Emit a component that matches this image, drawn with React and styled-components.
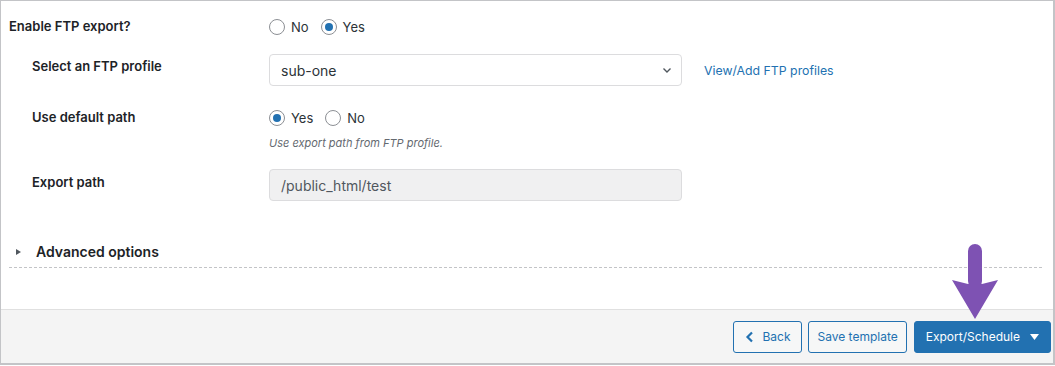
import React from 'react'
import styled, { createGlobalStyle } from 'styled-components'

const Global = createGlobalStyle`
    html, body {
        margin: 0;
        padding: 0;
        background: #fff;
    }
    body {
        font-family: Inter, "Noto Sans", "Liberation Sans", sans-serif;
        color: #1d2327;
        font-size: 13px;
    }
`

function Radio({ checked, label }) {
    return (
        <RadioLabel>
            <Circle checked={checked} />
            <span>{label}</span>
        </RadioLabel>
    )
}

export default function App() {
    return (
        <>
            <Global />
            <Panel>
                <Body>
                    <Row top={17}>
                        <Label indent={9} offset={0}>Enable FTP export?</Label>
                        <Field>
                            <RadioGroup>
                                <Radio label="No" />
                                <Radio label="Yes" checked />
                            </RadioGroup>
                        </Field>
                    </Row>
                    <Row top={18}>
                        <Label indent={32} offset={4}>Select an FTP profile</Label>
                        <Field>
                            <FieldLine>
                                <Select>
                                    <span>sub-one</span>
                                    <svg width="12" height="12" viewBox="0 0 12 12">
                                        <path d="M2.5 4.5 L6 8 L9.5 4.5" fill="none" stroke="#50575e" strokeWidth="1.4" />
                                    </svg>
                                </Select>
                                <Link>View/Add FTP profiles</Link>
                            </FieldLine>
                        </Field>
                    </Row>
                    <Row top={23}>
                        <Label indent={32} offset={0}>Use default path</Label>
                        <Field>
                            <RadioGroup>
                                <Radio label="Yes" checked />
                                <Radio label="No" />
                            </RadioGroup>
                            <Description>Use export path from FTP profile.</Description>
                        </Field>
                    </Row>
                    <Row top={19}>
                        <Label indent={32} offset={5}>Export path</Label>
                        <Field>
                            <Input>/public_html/test</Input>
                        </Field>
                    </Row>
                    <Advanced>
                        <Caret />
                        Advanced options
                    </Advanced>
                </Body>
                <Footer>
                    <Button pad={11}>
                        <svg width="10" height="12" viewBox="0 0 10 12">
                            <path d="M7 1.5 L2.5 6 L7 10.5" fill="none" stroke="#2271b1" strokeWidth="2.2" />
                        </svg>
                        Back
                    </Button>
                    <Button pad={8}>Save template</Button>
                    <PrimaryButton pad={11}>
                        Export/Schedule
                        <svg width="9" height="6" viewBox="0 0 9 6">
                            <path d="M0 0 H9 L4.5 6 Z" fill="#fff" />
                        </svg>
                    </PrimaryButton>
                    <Arrow width="48" height="78" viewBox="0 0 48 78">
                        <rect x="16" y="0" width="14" height="44" rx="7" fill="#7e52b3" />
                        <path d="M0 36 L23 75 L46 36 L30 40 L16 40 Z" fill="#7e52b3" />
                    </Arrow>
                </Footer>
            </Panel>
        </>
    )
}

const Panel = styled.div`
    width: 1052px;
    height: 362px;
    border: 1px solid #c3c4c7;
    border-right: 2px solid #c3c4c7;
    border-bottom: 2px solid #c3c4c7;
    display: flex;
    flex-direction: column;
    background: #fff;
`
const Body = styled.div`
    flex: 1;
    display: flex;
    flex-direction: column;
`
const Row = styled.div`
    display: flex;
    margin-top: ${p => p.top}px;
`
const Label = styled.div`
    width: ${p => 269 - p.indent}px;
    padding-left: ${p => p.indent - 1}px;
    padding-top: ${p => p.offset}px;
    font-weight: 600;
    font-size: 13px;
    line-height: 16px;
    color: #1d2327;
`
const Field = styled.div`
    display: flex;
    flex-direction: column;
`
const FieldLine = styled.div`
    display: flex;
    align-items: center;
    gap: 22px;
`
const RadioGroup = styled.div`
    display: flex;
    gap: 12px;
    height: 18px;
    align-items: center;
`
const RadioLabel = styled.label`
    display: flex;
    align-items: center;
    gap: 6px;
    font-size: 13px;
    color: #2c3338;
`
const Circle = styled.span`
    width: 14px;
    height: 14px;
    border-radius: 50%;
    border: 1px solid #8c8f94;
    background: #fff;
    position: relative;
    display: inline-block;
    &::after {
        content: '';
        display: ${p => (p.checked ? 'block' : 'none')};
        position: absolute;
        left: 3px;
        top: 3px;
        width: 8px;
        height: 8px;
        border-radius: 50%;
        background: #2271b1;
    }
`
const Description = styled.div`
    margin-top: 9px;
    font-size: 11px;
    line-height: 14px;
    font-style: italic;
    color: #646970;
`
const Select = styled.div`
    box-sizing: border-box;
    width: 413px;
    height: 32px;
    border: 1px solid #dcdcde;
    border-radius: 4px;
    background: #fff;
    display: flex;
    align-items: center;
    justify-content: space-between;
    padding: 0 8px 0 11px;
    font-size: 14px;
    color: #2c3338;
`
const Link = styled.a`
    color: #2271b1;
    font-size: 12.3px;
    cursor: pointer;
`
const Input = styled.div`
    box-sizing: border-box;
    width: 413px;
    height: 32px;
    border: 1px solid #dcdcde;
    border-radius: 4px;
    background: #f0f0f1;
    display: flex;
    align-items: center;
    padding: 0 11px;
    font-size: 14px;
    color: #50575e;
`
const Advanced = styled.div`
    margin: 42px 11px 0 8px;
    padding: 0 0 6px 7px;
    border-bottom: 1px dashed #c3c4c7;
    display: flex;
    align-items: center;
    gap: 15px;
    font-weight: 600;
    font-size: 14px;
    line-height: 18px;
    color: #1d2327;
`
const Caret = styled.span`
    width: 0;
    height: 0;
    border-top: 3px solid transparent;
    border-bottom: 3px solid transparent;
    border-left: 5px solid #50575e;
`
const Footer = styled.div`
    height: 54px;
    box-sizing: border-box;
    border-top: 1px solid #e0e0e0;
    background: #f4f4f4;
    display: flex;
    align-items: center;
    justify-content: flex-end;
    gap: 6px;
    padding-right: 2px;
    position: relative;
`
const Button = styled.button`
    box-sizing: border-box;
    height: 32px;
    padding: 0 ${p => p.pad}px;
    border: 1px solid #2271b1;
    border-radius: 3px;
    background: #f6f7f7;
    color: #2271b1;
    font-family: inherit;
    font-size: 12px;
    display: flex;
    align-items: center;
    gap: 7px;
`
const PrimaryButton = styled(Button)`
    margin-left: 1px;
    background: #2271b1;
    color: #fff;
    gap: 10px;
`
const Arrow = styled.svg`
    position: absolute;
    left: 951px;
    top: -66px;
`
